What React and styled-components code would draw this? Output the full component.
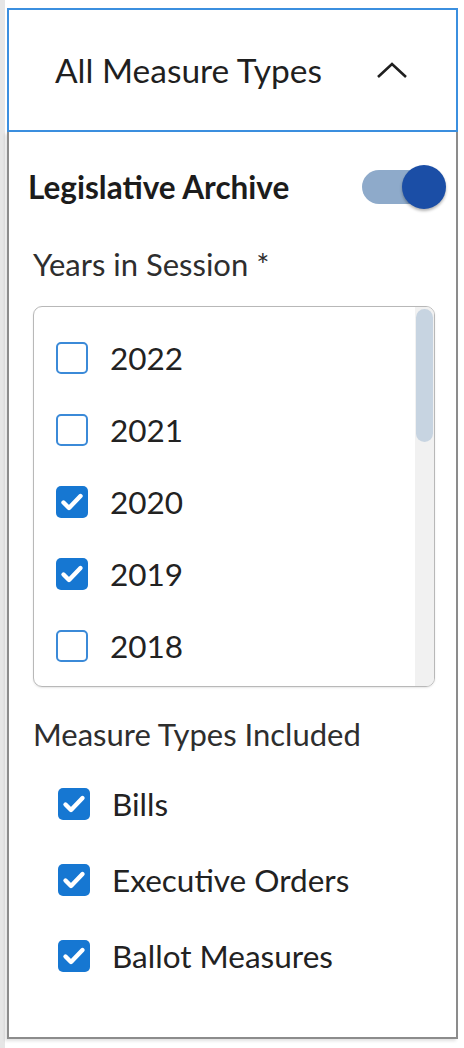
import React from "react";
import styled, { createGlobalStyle } from "styled-components";

const Global = createGlobalStyle`
  html, body { margin: 0; padding: 0; background: #ffffff; }
  body { font-family: Lato, "Open Sans", sans-serif; }
  * { box-sizing: border-box; }
`;

const Page = styled.div`
  width: 464px;
  height: 1048px;
  padding: 8px 0 0 7px;
  background: linear-gradient(to right, #e6e6e6 0, #e6e6e6 5px, #ffffff 5px);
  overflow: hidden;
`;

const Dropdown = styled.div`
  width: 451px;
  display: flex;
  flex-direction: column;
`;

const Header = styled.button`
  height: 124px;
  border: 2px solid #3b8fdf;
  background: #ffffff;
  display: flex;
  align-items: center;
  justify-content: space-between;
  padding: 0 48px 0 46px;
  font-family: Lato, sans-serif;
  font-size: 33.5px;
  color: #1f1f1f;
  cursor: pointer;
`;

const Panel = styled.div`
  height: 907px;
  border: 2px solid #8c8c8c;
  border-top: none;
  background: #ffffff;
  box-shadow: -2px 2px 3px rgba(0, 0, 0, 0.12);
  padding: 0 0 0 19px;
  display: flex;
  flex-direction: column;
`;

const ToggleRow = styled.div`
  display: flex;
  align-items: center;
  justify-content: space-between;
  height: 56px;
  margin-top: 27px;
  padding-right: 18px;
`;

const Title = styled.span`
  font-size: 31.5px;
  font-weight: 700;
  color: #1c1c1c;
`;

const Track = styled.span`
  position: relative;
  width: 76px;
  height: 34px;
  border-radius: 17px;
  background: #8eaaca;
`;

const Thumb = styled.span`
  position: absolute;
  right: -8px;
  top: -5px;
  width: 44px;
  height: 44px;
  border-radius: 50%;
  background: #1b4ea6;
  box-shadow: 0 2px 3px rgba(0, 0, 0, 0.3);
`;

const FieldLabel = styled.div`
  font-size: 31px;
  color: #2e2e2e;
  margin-left: 5px;
  margin-top: ${(p) => p.$top}px;
  line-height: 36px;
`;

const ListBox = styled.div`
  position: relative;
  margin: 24px 0 0 5px;
  width: 402px;
  height: 381px;
  border: 1.5px solid #b8b8b8;
  border-radius: 9px;
  box-shadow: 0 1px 2px rgba(0, 0, 0, 0.1);
  overflow: hidden;
  padding: 15px 0 0 22px;
`;

const ScrollTrack = styled.div`
  position: absolute;
  top: 0;
  right: 0;
  bottom: 0;
  width: 19px;
  background: #f1f1f1;
  padding: 2px 1px;
`;

const ScrollThumb = styled.div`
  height: 133px;
  border-radius: 9px;
  background: #c7d4e1;
`;

const Row = styled.label`
  display: flex;
  align-items: center;
  gap: 22px;
  height: ${(p) => p.$h}px;
  font-size: 31.5px;
  color: #222222;
  flex-shrink: 0;
`;

const Box = styled.span`
  width: 32px;
  height: 32px;
  border-radius: 5px;
  flex-shrink: 0;
  display: flex;
  align-items: center;
  justify-content: center;
  border: ${(p) => (p.$on ? "none" : "2px solid #3b8ad8")};
  background: ${(p) => (p.$on ? "#1677d2" : "#ffffff")};
`;

const TypeList = styled.div`
  display: flex;
  flex-direction: column;
  margin: 14px 0 0 30px;
`;

const Check = ({ on }) => (
  <Box $on={on}>
    {on && (
      <svg width="24" height="20" viewBox="0 0 24 20">
        <polyline
          points="3.5,10.5 9,16 20.5,4"
          fill="none"
          stroke="#ffffff"
          strokeWidth="4.4"
          strokeLinecap="round"
          strokeLinejoin="round"
        />
      </svg>
    )}
  </Box>
);

const years = [
  [2022, false],
  [2021, false],
  [2020, true],
  [2019, true],
  [2018, false],
];

const types = ["Bills", "Executive Orders", "Ballot Measures"];

export default function App() {
  return (
    <>
      <Global />
      <Page>
        <Dropdown>
          <Header>
            <span>All Measure Types</span>
            <svg width="32" height="20" viewBox="0 0 32 20">
              <polyline
                points="2,17 16,4 30,17"
                fill="none"
                stroke="#1f1f1f"
                strokeWidth="2.6"
              />
            </svg>
          </Header>
          <Panel>
            <ToggleRow>
              <Title>Legislative Archive</Title>
              <Track>
                <Thumb />
              </Track>
            </ToggleRow>
            <FieldLabel $top={31}>Years in Session *</FieldLabel>
            <ListBox>
              {years.map(([y, on]) => (
                <Row key={y} $h={72}>
                  <Check on={on} />
                  {y}
                </Row>
              ))}
              <ScrollTrack>
                <ScrollThumb />
              </ScrollTrack>
            </ListBox>
            <FieldLabel $top={29}>Measure Types Included</FieldLabel>
            <TypeList>
              {types.map((t) => (
                <Row key={t} $h={76}>
                  <Check on />
                  {t}
                </Row>
              ))}
            </TypeList>
          </Panel>
        </Dropdown>
      </Page>
    </>
  );
}
